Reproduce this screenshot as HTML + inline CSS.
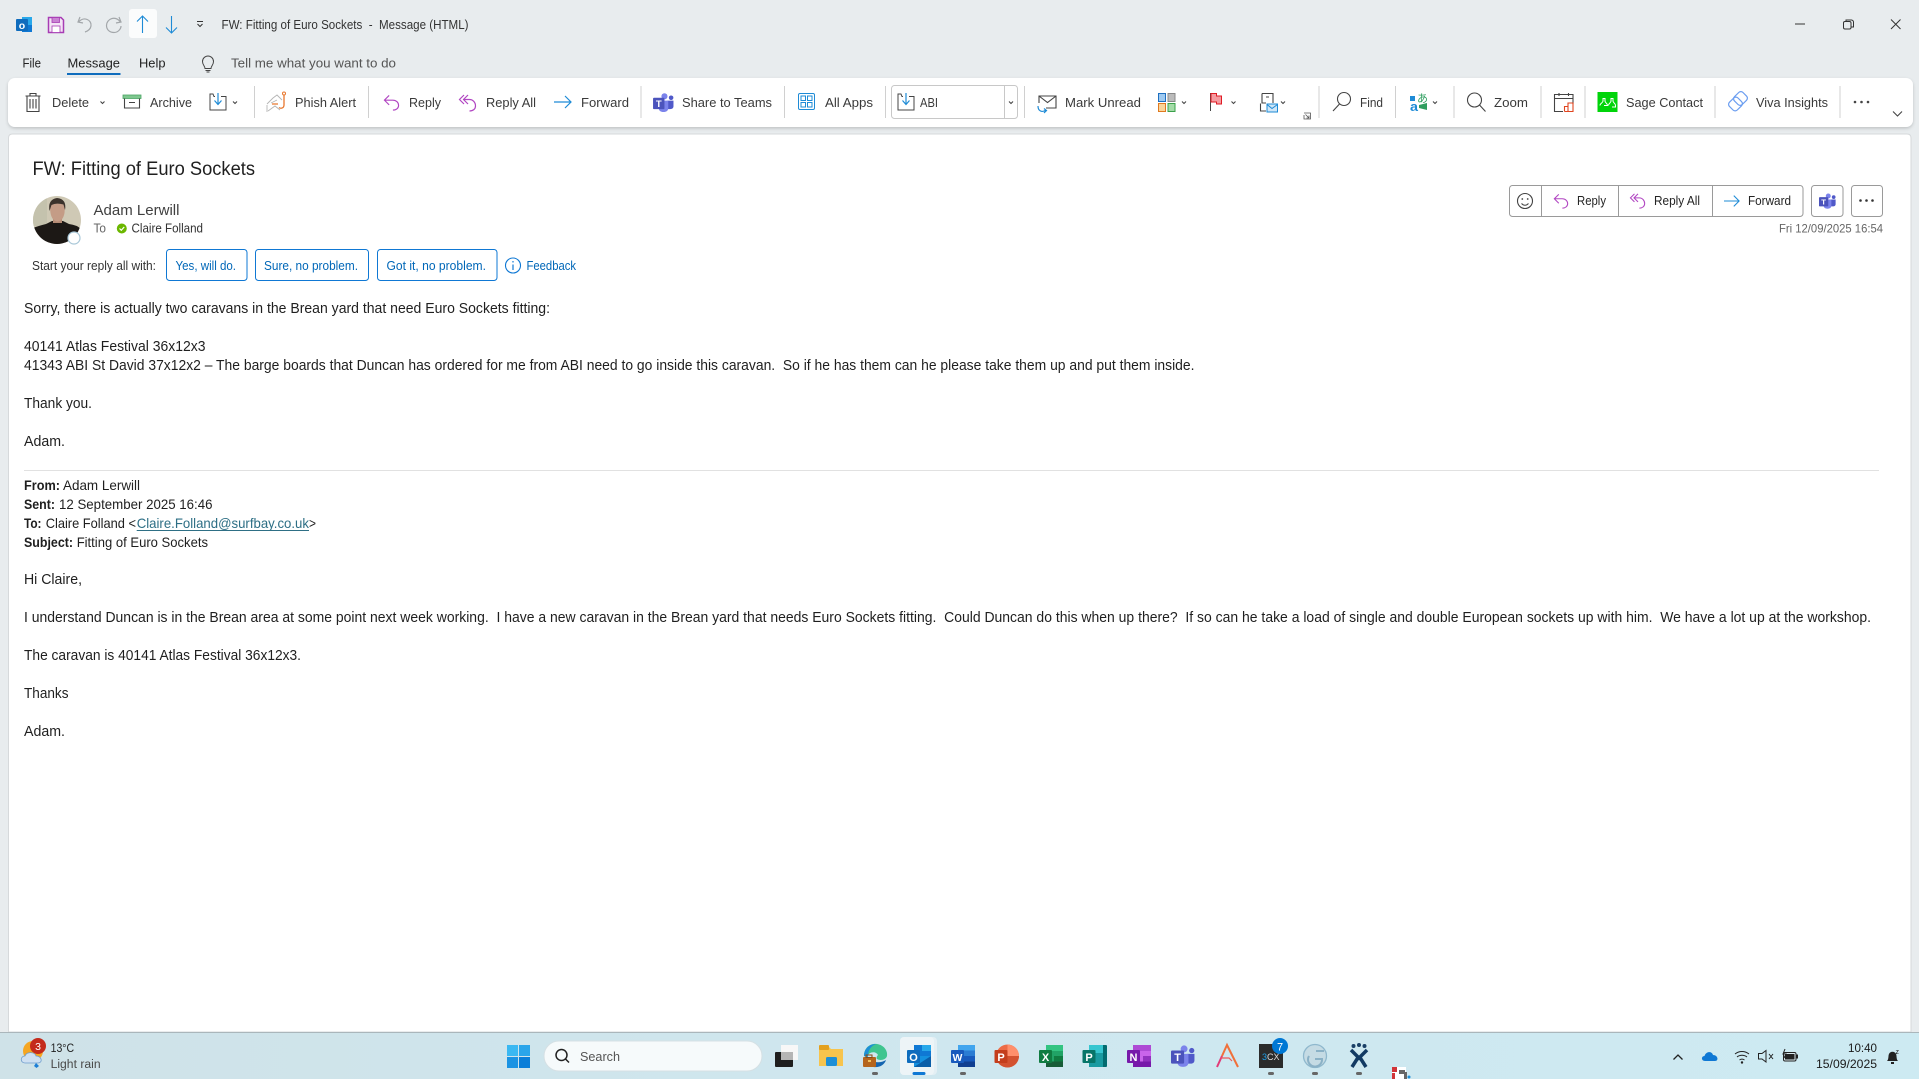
<!DOCTYPE html>
<html lang="en"><head><meta charset="utf-8"><title>FW: Fitting of Euro Sockets - Message (HTML)</title>
<style>
html,body{margin:0;padding:0;width:1919px;height:1079px;overflow:hidden;background:#e8ecee}
svg{display:block;position:absolute;left:0;top:0}
text{font-family:"Liberation Sans","DejaVu Sans",sans-serif;font-size:12px;fill:#262626;white-space:pre}
.b{font-size:14.5px;fill:#1f1f1f}
.m{font-size:14px;fill:#1f1f1f}
.t{font-size:13px;fill:#3a3a3a}
.bl{fill:#0067b8;font-size:13px}
.ln{fill:none;stroke:#444;stroke-width:1.1}
.fw{fill:none;stroke:#1e8bd6;stroke-width:1.2}
.ch{fill:none;stroke:#444;stroke-width:1.1}
</style></head><body>
<svg width="1919" height="1079" viewBox="0 0 1919 1079" xmlns="http://www.w3.org/2000/svg">
<defs>
<linearGradient id="tb" x1="0" x2="1" y1="0" y2="0"><stop offset="0" stop-color="#cfe2e8"/><stop offset=".5" stop-color="#cfe7ef"/><stop offset="1" stop-color="#cdeaf2"/></linearGradient>
<filter id="sh" x="-1%" y="-20%" width="102%" height="150%"><feDropShadow dx="0" dy="1.5" stdDeviation="1.5" flood-color="#000" flood-opacity=".18"/></filter>
<symbol id="reply" viewBox="0 0 18 18" overflow="visible"><path d="M6.5 1.5L1.5 6.5L6.5 11.5M1.500 6.500H10.500C14 6.500 16.500 9 16.500 12C16.500 15 14 17 10.500 17" fill="none" stroke="#b146c2" stroke-width="1.2"/></symbol>
<symbol id="replyall" viewBox="0 0 18 18" overflow="visible"><path d="M5 1L0.500 5.500L5 10M9 1L4.500 5.500L9 10M4.500 5.500H10.500C14 5.500 16.500 8.500 16.500 12C16.500 15 14 17 10.500 17" fill="none" stroke="#b146c2" stroke-width="1.2"/></symbol>
<symbol id="fwd" viewBox="0 0 18 18" overflow="visible"><path d="M0 9H17M11 3L17 9L11 15" fill="none" stroke="#1e8bd6" stroke-width="1.2"/></symbol>
<symbol id="move" viewBox="0 0 18 18" overflow="visible"><path d="M6 3.500H5L4 1H1V17H17V3.500H12" fill="none" stroke="#444" stroke-width="1"/><path d="M9 0V11M5.500 7.500L9 11.500L12.500 7.500" fill="none" stroke="#1e8bd6" stroke-width="1.2"/></symbol>
<symbol id="teams" viewBox="0 0 22 20" overflow="visible"><circle cx="12" cy="3.500" r="3.200" fill="#7b83eb"/><circle cx="19" cy="5" r="2.400" fill="#5059c9"/><path d="M15 8H21.500V14C21.500 16 20 17 18 17H15Z" fill="#5059c9"/><path d="M6 8H16V16C16 18.500 14 20 11 20C8 20 6 18.500 6 16Z" fill="#7b83eb"/><rect x="0" y="5" width="12" height="12" rx="1" fill="#4b53bc"/><text x="6" y="14.500" text-anchor="middle" style="font-size:10px;font-weight:bold;fill:#fff">T</text></symbol>
</defs>

<rect width="1919" height="1079" fill="#e8ecee"/>

<!-- Title bar -->
<g>
<rect x="22" y="17" width="10" height="8" fill="#28a8ea"/><rect x="22" y="25" width="10" height="7" fill="#0f78d4"/><rect x="16" y="19" width="12" height="12" rx="1" fill="#0f6cbd"/>
<text x="22" y="29" text-anchor="middle" style="font-size:10.500px;font-weight:bold;fill:#fff">o</text>
<path d="M48.500 17.500H61L63.500 20V32.500H48.500Z" fill="#f4e4f6" stroke="#a73cb4" stroke-width="1.500"/><rect x="52" y="17.500" width="7.500" height="5" fill="#c983d3" stroke="#a73cb4" stroke-width=".8"/><rect x="52" y="26" width="8" height="6.500" fill="#fff" stroke="#a73cb4" stroke-width=".8"/>
<path d="M80 17L78 22L83 23M78.500 22C84 16 92 20 91 26C90.500 29 88 31 85 32" fill="none" stroke="#a3a7aa" stroke-width="1.200"/>
<path d="M119 17L121 22L116 23M120.500 22C115 15 106.500 19 106.500 25.500C106.500 30 110 32.500 114 32.500C118 32.500 121 29 121 26" fill="none" stroke="#a3a7aa" stroke-width="1.200"/>
<rect x="129" y="9" width="28" height="29" rx="3" fill="#fbfcfc"/>
<path d="M142.500 33V16M137 21.500L142.500 16L148 21.500" fill="none" stroke="#1e8bd6" stroke-width="1.100"/>
<path d="M171.500 16V33M166 27.500L171.500 33L177 27.500" fill="none" stroke="#1e8bd6" stroke-width="1.100"/>
<path d="M197 21.500H203M197.500 24L200 26.500L202.500 24" fill="none" stroke="#333" stroke-width="1"/>
<text x="221.500" y="29" textLength="247" lengthAdjust="spacingAndGlyphs" style="font-size:12.500px;fill:#333">FW: Fitting of Euro Sockets  -  Message (HTML)</text>
<path d="M1795 24H1805" stroke="#333" stroke-width="1"/>
<rect x="1843.500" y="21.500" width="7.500" height="7.500" rx="1.500" fill="none" stroke="#333" stroke-width="1"/><path d="M1846 21V20H1851.500C1852.500 20 1853.500 21 1853.500 22V27H1851.500" fill="none" stroke="#333" stroke-width="1"/>
<path d="M1891 19.500L1900.500 29M1900.500 19.500L1891 29" stroke="#333" stroke-width="1"/>
</g>

<!-- Menu -->
<text x="22.500" y="67.500" textLength="18.500" lengthAdjust="spacingAndGlyphs" style="fill:#222;font-size:12.500px">File</text>
<text x="67.500" y="67.500" textLength="52.500" lengthAdjust="spacingAndGlyphs" style="fill:#222;font-size:12.500px">Message</text>
<rect x="67" y="73" width="53.500" height="2" fill="#0f6cbd"/>
<text x="139" y="67.500" textLength="26.500" lengthAdjust="spacingAndGlyphs" style="fill:#222;font-size:12.500px">Help</text>
<path d="M205 68.500C205 66 202.500 65 202.500 61.500A5.500 5.500 0 0 1 213.500 61.500C213.500 65 211 66 211 68.500ZM205.500 70.500H210.500M206.500 72H209.500" fill="none" stroke="#444" stroke-width="1"/>
<text x="231" y="67.500" textLength="165" lengthAdjust="spacingAndGlyphs" style="fill:#555;font-size:12.500px">Tell me what you want to do</text>

<!-- Ribbon -->
<rect x="8" y="78" width="1905" height="49" rx="7" fill="#fff" filter="url(#sh)"/>
<path d="M254.500 86V118M368.500 86V118M641 86V118M784.500 86V118M885.500 86V118M1024.500 86V118M1319 86V118M1395.500 86V118M1454 86V118M1541 86V118M1585 86V118M1715 86V118M1840 86V118" stroke="#d0d0d0" fill="none"/>

<path d="M25.500 96H40.500M30 96V93.500H36V96M27 96V111.500H39V96M30 99V108.500M33 99V108.500M36 99V108.500" class="ln" stroke-width="1"/>
<text x="52" y="107" textLength="37" lengthAdjust="spacingAndGlyphs" class="t">Delete</text>
<path d="M100.500 101.500L102.500 103.500L104.500 101.500" class="ch"/>
<rect x="123" y="95" width="18" height="3.500" fill="#7fc78f" stroke="#4aa564" stroke-width=".8"/><path d="M124.500 98.500V108H139.500V98.500M129 102.500H135" class="ln"/>
<text x="150" y="107" textLength="42" lengthAdjust="spacingAndGlyphs" class="t">Archive</text>
<use href="#move" x="209" y="93" width="18" height="18"/>
<path d="M233 101.500L235 103.500L237 101.500" class="ch"/>
<g><path d="M267 104L273 98L277 95L282 100M267 105V112M268 111L275 106L280 110M271 103L277 100" fill="none" stroke="#b5b5b5" stroke-width=".9"/><path d="M284 95V105C284 108 281 109 279 107.500M278 104H272" fill="none" stroke="#e8772e" stroke-width="1.300"/><circle cx="284" cy="93.500" r="1.500" fill="none" stroke="#e8772e"/></g>
<text x="295" y="107" textLength="61" lengthAdjust="spacingAndGlyphs" class="t">Phish Alert</text>
<use href="#reply" x="383" y="94" width="17" height="17"/>
<text x="409" y="107" textLength="32" lengthAdjust="spacingAndGlyphs" class="t">Reply</text>
<use href="#replyall" x="459" y="94" width="18" height="18"/>
<text x="486" y="107" textLength="50" lengthAdjust="spacingAndGlyphs" class="t">Reply All</text>
<use href="#fwd" x="554" y="93" width="18" height="18"/>
<text x="581" y="107" textLength="48" lengthAdjust="spacingAndGlyphs" class="t">Forward</text>
<use href="#teams" x="653" y="93" width="21" height="19"/>
<text x="682" y="107" textLength="90" lengthAdjust="spacingAndGlyphs" class="t">Share to Teams</text>
<g fill="none" stroke="#1e8bd6" stroke-width="1"><rect x="798.500" y="93.500" width="16" height="16" rx="1.500"/><rect x="801" y="96" width="4.500" height="4.500"/><rect x="807.500" y="96" width="4.500" height="4.500"/><rect x="801" y="102.500" width="4.500" height="4.500"/><rect x="807.500" y="102.500" width="4.500" height="4.500"/></g>
<text x="825" y="107" textLength="48" lengthAdjust="spacingAndGlyphs" class="t">All Apps</text>
<rect x="891.500" y="85.500" width="126" height="33" rx="3" fill="#fff" stroke="#c8c8c8"/><path d="M1004.500 86V118" stroke="#c8c8c8"/>
<use href="#move" x="897" y="93" width="18" height="18"/>
<text x="920" y="107" textLength="18" lengthAdjust="spacingAndGlyphs" class="t">ABI</text>
<path d="M1009 101.500L1011 103.500L1013 101.500" class="ch"/>
<path d="M1039 103V96H1056V108H1046M1039 96L1047.500 102.500L1056 96" class="ln" stroke-width="1"/><path d="M1038 106C1038 111 1042 113 1046 110M1044 113L1046.500 110.500L1044 108.500" class="fw"/>
<text x="1065" y="107" textLength="76" lengthAdjust="spacingAndGlyphs" class="t">Mark Unread</text>
<rect x="1158.500" y="93.500" width="7" height="8" fill="#9ec9f0" stroke="#1e6fc0"/><rect x="1168" y="93.500" width="7" height="8" fill="#bbb" stroke="#888"/><rect x="1158.500" y="103.500" width="7" height="8" fill="#fad59a" stroke="#e0791f"/><rect x="1168" y="103.500" width="7" height="8" fill="#a4dba8" stroke="#3aa04a"/>
<path d="M1182 101.500L1184 103.500L1186 101.500" class="ch"/>
<path d="M1210.500 93V111" stroke="#444"/><path d="M1211 93.500H1216.500V96H1221.500V104H1216.500V102H1211Z" fill="#f59ba0" stroke="#e01b24"/>
<path d="M1231.500 101.500L1233.500 103.500L1235.500 101.500" class="ch"/>
<path d="M1262 93.500H1273V103M1260.500 103.500V111H1266M1262 93.500V103H1266M1266 97H1269" class="ln" stroke-width="1"/><rect x="1267" y="104" width="10.500" height="8" fill="#cfe6f7" stroke="#1e8bd6"/><path d="M1267 104.500L1272 108.500L1277.500 104.500" fill="none" stroke="#1e8bd6"/>
<path d="M1281 101.500L1283 103.500L1285 101.500" class="ch"/>
<path d="M1304 113H1310.500V119H1304V115" fill="none" stroke="#555" stroke-width=".8"/><path d="M1305.500 114.500L1309 118M1309 115.500V118H1306.500" fill="none" stroke="#555" stroke-width=".8"/>
<circle cx="1344" cy="99" r="6.500" class="ln"/><path d="M1339.500 104L1333 111" class="ln"/>
<text x="1360" y="107" textLength="23" lengthAdjust="spacingAndGlyphs" class="t">Find</text>
<path d="M1410 96H1415V101H1410Z" fill="#1e8bd6"/><text x="1410" y="111" textLength="8" lengthAdjust="spacingAndGlyphs" style="font-size:13px;font-weight:bold;fill:#1e8bd6">a</text><text x="1417" y="102" textLength="11" lengthAdjust="spacingAndGlyphs" style="font-size:11px;fill:#2f9e5f;font-family:'Noto Sans CJK JP',sans-serif">あ</text><path d="M1419 105L1427 103V110L1419 108Z" fill="#2f9e5f"/>
<path d="M1433 101.500L1435 103.500L1437 101.500" class="ch"/>
<circle cx="1474.500" cy="100" r="7" class="ln"/><path d="M1479.500 105L1485.500 111.500" class="ln"/>
<text x="1494" y="107" textLength="34" lengthAdjust="spacingAndGlyphs" class="t">Zoom</text>
<path d="M1554.500 112V94.500H1573V104M1554.500 98.500H1573M1559 93V96M1568.500 93V96M1554.500 111.500H1563" class="ln" stroke-width="1"/>
<path d="M1564.500 111.500V106.500H1568V111.500M1568 111.500V103H1573V111.500H1564.500" fill="none" stroke="#e0451f" stroke-width="1.100"/>
<rect x="1597.500" y="92" width="20" height="20" fill="#00d40a"/>
<path d="M1600 105.500C1600 103 1603 103 1603 101V98.500H1605V101C1605 103 1607.500 103 1607.500 105.500H1604M1608.500 105.500C1608.500 103 1611 103 1611 101V98.500H1613V101C1613 103 1615.500 103 1615.500 105.500V107H1612" fill="none" stroke="#fff" stroke-width="1"/>
<text x="1626" y="107" textLength="77" lengthAdjust="spacingAndGlyphs" class="t">Sage Contact</text>
<g fill="none" stroke="#6a9df0" stroke-width="1.200"><rect x="1735" y="92.500" width="11" height="12" rx="3" transform="rotate(45 1740.500 98.500)"/><rect x="1730" y="98" width="11" height="12" rx="3" transform="rotate(45 1735.500 104)"/></g>
<text x="1756" y="107" textLength="72" lengthAdjust="spacingAndGlyphs" class="t">Viva Insights</text>
<circle cx="1855" cy="102" r="1.300" fill="#444"/><circle cx="1861.500" cy="102" r="1.300" fill="#444"/><circle cx="1868" cy="102" r="1.300" fill="#444"/>
<path d="M1893 111.500L1897.500 116L1902 111.500" class="ln"/>

<!-- Message pane -->
<path d="M8.500 1032V138Q8.500 134 12.500 134H1907Q1911 134 1911 138V1032Z" fill="#fff" stroke="#d6d9db" stroke-width="1"/>

<text x="32.500" y="175" textLength="222.500" lengthAdjust="spacingAndGlyphs" style="font-size:19px;fill:#1f1f1f">FW: Fitting of Euro Sockets</text>

<clipPath id="av"><circle cx="57" cy="220" r="24"/></clipPath>
<g clip-path="url(#av)">
<rect x="33" y="196" width="48" height="48" fill="#cfc9b5"/>
<rect x="33" y="196" width="14" height="30" fill="#c4c2ad"/>
<path d="M33 244V228Q38 226 46 224L52 221H63L69 224Q77 225 81 229V244Z" fill="#1c1815"/>
<rect x="53" y="217" width="9" height="6" fill="#b48a74"/>
<path d="M49.500 205Q57 202 65 205L64.500 213Q63 221 57.500 221.500Q52 221 50.500 213Z" fill="#c49c86"/>
<path d="M49.500 211Q47.500 199.500 57 198Q67 199 65 210L63.500 204.500Q56 202.500 51.500 205Z" fill="#3b322b"/>
</g>
<circle cx="74" cy="238" r="6" fill="#fff" stroke="#a8c7d8" stroke-width="1.200"/>
<text x="93.500" y="215" textLength="86" lengthAdjust="spacingAndGlyphs" style="font-size:15px;fill:#404040">Adam Lerwill</text>
<text x="93.500" y="232.500" textLength="12.500" lengthAdjust="spacingAndGlyphs" style="fill:#666;font-size:12.500px">To</text>
<circle cx="121.800" cy="228.500" r="5" fill="#6bb700"/><path d="M119.500 228.500L121.300 230.300L124.200 227" fill="none" stroke="#fff" stroke-width="1.200"/>
<text x="131.500" y="232.500" textLength="71.500" lengthAdjust="spacingAndGlyphs" style="fill:#333;font-size:12.500px">Claire Folland</text>

<text x="32" y="270" textLength="124" lengthAdjust="spacingAndGlyphs" style="fill:#333;font-size:12.500px">Start your reply all with:</text>
<g fill="#fff" stroke="#0f78d4" stroke-width="1"><rect x="166.500" y="249.500" width="80.500" height="31" rx="3"/><rect x="255.500" y="249.500" width="113" height="31" rx="3"/><rect x="377.500" y="249.500" width="119.500" height="31" rx="3"/></g>
<text x="175.500" y="270" textLength="60.500" lengthAdjust="spacingAndGlyphs" class="bl">Yes, will do.</text>
<text x="264" y="270" textLength="94" lengthAdjust="spacingAndGlyphs" class="bl">Sure, no problem.</text>
<text x="386.500" y="270" textLength="99.500" lengthAdjust="spacingAndGlyphs" class="bl">Got it, no problem.</text>
<circle cx="513" cy="265.500" r="7.500" fill="none" stroke="#0f78d4" stroke-width="1.100"/><path d="M513 264.500V270M513 261V262.500" stroke="#0f78d4" stroke-width="1.200"/>
<text x="526.500" y="270" textLength="49.500" lengthAdjust="spacingAndGlyphs" class="bl">Feedback</text>

<!-- Action buttons -->
<rect x="1509.500" y="185.500" width="293.500" height="31" rx="3" fill="#fff" stroke="#9a9a9a"/>
<path d="M1541.500 186V216M1618.500 186V216M1712.500 186V216" stroke="#9a9a9a"/>
<circle cx="1525" cy="201" r="7.500" fill="none" stroke="#444" stroke-width="1.100"/><circle cx="1522.300" cy="199" r=".9" fill="#444"/><circle cx="1527.700" cy="199" r=".9" fill="#444"/><path d="M1521.500 203.500Q1525 207 1528.500 203.500" fill="none" stroke="#444"/>
<use href="#reply" x="1553" y="193" width="16" height="16"/>
<text x="1577" y="205" textLength="29" lengthAdjust="spacingAndGlyphs" style="fill:#242424;font-size:12.500px">Reply</text>
<use href="#replyall" x="1630" y="193" width="16" height="16"/>
<text x="1654" y="205" textLength="46" lengthAdjust="spacingAndGlyphs" style="fill:#242424;font-size:12.500px">Reply All</text>
<use href="#fwd" x="1724" y="193" width="16" height="16"/>
<text x="1748" y="205" textLength="43" lengthAdjust="spacingAndGlyphs" style="fill:#242424;font-size:12.500px">Forward</text>
<rect x="1811.500" y="185.500" width="31.500" height="31" rx="3" fill="#fff" stroke="#9a9a9a"/>
<use href="#teams" x="1819" y="193" width="17" height="16"/>
<rect x="1851.500" y="185.500" width="31" height="31" rx="3" fill="#fff" stroke="#9a9a9a"/>
<circle cx="1860.500" cy="200.500" r="1.300" fill="#333"/><circle cx="1866.500" cy="200.500" r="1.300" fill="#333"/><circle cx="1872.500" cy="200.500" r="1.300" fill="#333"/>
<text x="1779" y="232.500" textLength="104" lengthAdjust="spacingAndGlyphs" style="fill:#666">Fri 12/09/2025 16:54</text>

<!-- Body -->
<text class="b" x="24" y="313" textLength="526" lengthAdjust="spacingAndGlyphs">Sorry, there is actually two caravans in the Brean yard that need Euro Sockets fitting:</text>
<text class="b" x="24" y="351" textLength="181.500" lengthAdjust="spacingAndGlyphs">40141 Atlas Festival 36x12x3</text>
<text class="b" x="24" y="370" textLength="1170.500" lengthAdjust="spacingAndGlyphs">41343 ABI St David 37x12x2 – The barge boards that Duncan has ordered for me from ABI need to go inside this caravan.  So if he has them can he please take them up and put them inside.</text>
<text class="b" x="24" y="408" textLength="68" lengthAdjust="spacingAndGlyphs">Thank you.</text>
<text class="b" x="24" y="446" textLength="41" lengthAdjust="spacingAndGlyphs">Adam.</text>
<path d="M24 470.500H1879" stroke="#e1e1e1"/>

<text class="m" x="24" y="490" textLength="36" lengthAdjust="spacingAndGlyphs" font-weight="bold">From:</text>
<text class="m" x="63" y="490" textLength="77" lengthAdjust="spacingAndGlyphs">Adam Lerwill</text>
<text class="m" x="24" y="509" textLength="31" lengthAdjust="spacingAndGlyphs" font-weight="bold">Sent:</text>
<text class="m" x="59" y="509" textLength="153.500" lengthAdjust="spacingAndGlyphs">12 September 2025 16:46</text>
<text class="m" x="24" y="528" textLength="17.500" lengthAdjust="spacingAndGlyphs" font-weight="bold">To:</text>
<text class="m" x="45.700" y="528" textLength="90.300" lengthAdjust="spacingAndGlyphs">Claire Folland &lt;</text>
<text class="m" x="136.700" y="528" textLength="172.300" lengthAdjust="spacingAndGlyphs" style="fill:#2e6f85">Claire.Folland@surfbay.co.uk</text>
<path d="M136.700 530.500H309" stroke="#2e6f85" stroke-width="1"/>
<text class="m" x="309" y="528" textLength="7" lengthAdjust="spacingAndGlyphs">&gt;</text>
<text class="m" x="24" y="547" textLength="49" lengthAdjust="spacingAndGlyphs" font-weight="bold">Subject:</text>
<text class="m" x="76.700" y="547" textLength="131.300" lengthAdjust="spacingAndGlyphs">Fitting of Euro Sockets</text>

<text class="b" x="24" y="584" textLength="58" lengthAdjust="spacingAndGlyphs">Hi Claire,</text>
<text class="b" x="24" y="622" textLength="1847" lengthAdjust="spacingAndGlyphs">I understand Duncan is in the Brean area at some point next week working.  I have a new caravan in the Brean yard that needs Euro Sockets fitting.  Could Duncan do this when up there?  If so can he take a load of single and double European sockets up with him.  We have a lot up at the workshop.</text>
<text class="b" x="24" y="660" textLength="277" lengthAdjust="spacingAndGlyphs">The caravan is 40141 Atlas Festival 36x12x3.</text>
<text class="b" x="24" y="698" textLength="44.500" lengthAdjust="spacingAndGlyphs">Thanks</text>
<text class="b" x="24" y="736" textLength="41" lengthAdjust="spacingAndGlyphs">Adam.</text>

<!-- Taskbar -->
<rect x="0" y="1032" width="1919" height="47" fill="url(#tb)"/>
<rect x="0" y="1032" width="1919" height="1" fill="#aab6bb"/>

<circle cx="33" cy="1051" r="10" fill="#f5a623"/>
<path d="M25 1063C20 1063 20 1056 25 1056C27 1051 35 1052 36 1056C42 1056 43 1063 38 1063Z" fill="#cfe0f2" stroke="#6f9ccc" stroke-width=".8"/>
<path d="M36 1063L39 1066L36.500 1068L34 1066Z" fill="#1e7fd6"/>
<circle cx="38" cy="1046" r="8" fill="#c42b1c"/><text x="38" y="1050" text-anchor="middle" style="font-size:10.500px;fill:#fff">3</text>
<text x="50.600" y="1052" textLength="23.500" lengthAdjust="spacingAndGlyphs" style="font-size:11.500px;fill:#1f1f1f">13°C</text>
<text x="50.600" y="1068" textLength="50" lengthAdjust="spacingAndGlyphs" style="font-size:11.500px;fill:#4a4a4a">Light rain</text>

<rect x="507" y="1045" width="11" height="11" fill="#3ab8f2"/><rect x="519" y="1045" width="11" height="11" fill="#2aa5ea"/><rect x="507" y="1057" width="11" height="11" fill="#1b93e3"/><rect x="519" y="1057" width="11" height="11" fill="#0b7ed8"/>
<rect x="544" y="1041" width="218" height="30" rx="15" fill="#f6fafb" stroke="#d5e0e4"/>
<circle cx="561.500" cy="1055" r="5.500" fill="none" stroke="#222" stroke-width="1.500"/><path d="M565.500 1059L569 1062.500" stroke="#222" stroke-width="1.500"/>
<text x="580" y="1061" textLength="40" lengthAdjust="spacingAndGlyphs" style="font-size:13px;fill:#555">Search</text>

<!-- taskbar apps -->
<rect x="781" y="1045" width="17" height="15" fill="#f7f7f7"/>
<rect x="775" y="1052" width="18" height="15" rx="1" fill="#1e1e1e"/><rect x="781" y="1052" width="12" height="8" fill="#b5b5b5"/>

<path d="M819 1047H829L831 1049H843V1066H819Z" fill="#f7c44d"/><rect x="819" y="1045" width="10" height="5" rx="1" fill="#e4a11f"/><rect x="826" y="1057" width="11" height="9" rx="1.500" fill="#1e8fd6"/>

<path d="M864 1056C864 1047 871 1043 877 1044C884 1045 888 1051 887 1056C886 1060 880 1061 877 1059C876 1058 877 1056 878 1055C876 1051 869 1051 867 1057Z" fill="#3fc58f"/>
<path d="M864 1056C864 1048 870 1044 876 1044C871 1046 868 1050 868 1057Z" fill="#1e8fd6"/>
<path d="M870 1066C877 1069 884 1066 886 1060C881 1063 875 1063 871 1060Z" fill="#1565b0"/>
<rect x="863" y="1057" width="13" height="10" rx="1" fill="#b5651d"/><rect x="866" y="1055" width="6" height="2.500" fill="none" stroke="#8a4a12"/><rect x="868" y="1060" width="3" height="2" fill="#f2c25e"/>

<rect x="900" y="1037" width="37" height="38" rx="4" fill="#e3eff4"/><rect x="900" y="1037" width="34" height="38" rx="4" fill="#edf4f7"/>
<rect x="914" y="1045" width="17" height="11" fill="#0f78d4"/><rect x="922" y="1045" width="9" height="6" fill="#28a8ea"/><path d="M914 1056L931 1056V1067H914Z" fill="#1490df"/><path d="M914 1067L931 1056V1067Z" fill="#0a5ea8"/>
<rect x="907" y="1050" width="13" height="13" rx="1" fill="#0f6cbd"/><text x="913.500" y="1061" text-anchor="middle" style="font-size:11px;font-weight:bold;fill:#fff">O</text>
<rect x="912.500" y="1072" width="13" height="3" rx="1.500" fill="#0f78d4"/>

<rect x="958" y="1045" width="17" height="22" fill="#2b7cd3"/><rect x="958" y="1045" width="17" height="5.500" fill="#41a5ee"/><rect x="958" y="1056" width="17" height="5.500" fill="#185abd"/><rect x="958" y="1061.500" width="17" height="5.500" fill="#103f91"/>
<rect x="951" y="1050" width="13" height="13" rx="1" fill="#185abd"/><text x="957.500" y="1061" text-anchor="middle" style="font-size:10.500px;font-weight:bold;fill:#fff">W</text>

<circle cx="1007.500" cy="1056" r="11.500" fill="#ed6c47"/><path d="M1007.500 1056V1044.500A11.500 11.500 0 0 1 1019 1056Z" fill="#ff8f6b"/><path d="M1007.500 1056H1019A11.500 11.500 0 0 1 996 1056Z" fill="#d35230"/>
<rect x="994.500" y="1050" width="13" height="13" rx="1" fill="#c43e1c"/><text x="1001" y="1061" text-anchor="middle" style="font-size:11px;font-weight:bold;fill:#fff">P</text>

<rect x="1046" y="1045" width="17" height="22" fill="#21a366"/><rect x="1046" y="1045" width="17" height="6" fill="#33c481"/><rect x="1054" y="1056" width="9" height="5.500" fill="#107c41"/><rect x="1046" y="1061.500" width="17" height="5.500" fill="#185c37"/>
<rect x="1039" y="1050" width="13" height="13" rx="1" fill="#107c41"/><text x="1045.500" y="1061" text-anchor="middle" style="font-size:11px;font-weight:bold;fill:#fff">X</text>

<rect x="1089" y="1045" width="18" height="22" rx="1" fill="#036c70"/><rect x="1089" y="1045" width="14" height="22" fill="#1a9ba1"/><rect x="1089" y="1045" width="14" height="8" fill="#37c6d0"/>
<rect x="1082.500" y="1050" width="13" height="13" rx="1" fill="#077568"/><text x="1089" y="1061" text-anchor="middle" style="font-size:11px;font-weight:bold;fill:#fff">P</text>

<rect x="1133" y="1045" width="18" height="22" rx="1" fill="#ca64ea"/><rect x="1133" y="1045" width="18" height="6" fill="#ae4bd5"/><rect x="1143" y="1056" width="8" height="5.500" fill="#9332bf"/><rect x="1133" y="1061.500" width="18" height="5.500" fill="#7719aa"/>
<rect x="1127" y="1050" width="13" height="13" rx="1" fill="#7719aa"/><text x="1133.500" y="1061" text-anchor="middle" style="font-size:11px;font-weight:bold;fill:#fff">N</text>

<use href="#teams" x="1171" y="1045" width="24" height="22"/>

<path d="M1217 1067L1222 1056" stroke="#e23a78" stroke-width="2"/>
<path d="M1222 1056L1227 1045L1238 1067" fill="none" stroke="#f0703a" stroke-width="2"/>
<path d="M1221 1058L1229 1058L1232 1061" fill="none" stroke="#ee5a5a" stroke-width="1.200"/>

<rect x="1259" y="1044" width="24" height="24" fill="#2b2b2b"/>
<text x="1262" y="1060" style="font-size:9px;fill:#1e9fe8">3</text><text x="1267" y="1060" style="font-size:9px;fill:#ddd">CX</text>
<circle cx="1280" cy="1046" r="8" fill="#0078d4"/><text x="1280" y="1050.500" text-anchor="middle" style="font-size:11px;fill:#fff">7</text>

<circle cx="1315" cy="1056" r="11.500" fill="#c5dbe4" stroke="#8fb8cd" stroke-width="1.300"/><path d="M1324 1051H1316M1309 1056A7 7 0 1 0 1322 1059H1315" fill="none" stroke="#8ab1c6" stroke-width="2"/>

<circle cx="1353.500" cy="1046" r="2" fill="#1a3f66"/><circle cx="1359" cy="1045" r="2" fill="#1a3f66"/><circle cx="1364.500" cy="1046" r="2" fill="#1a3f66"/>
<path d="M1351 1050L1359 1058L1367 1050M1359 1056L1352 1067M1359 1056L1366 1067" fill="none" stroke="#123a63" stroke-width="3.500"/>

<g fill="#666"><rect x="872" y="1072" width="6" height="3" rx="1.500"/><rect x="960" y="1072" width="6" height="3" rx="1.500"/><rect x="1268" y="1072" width="6" height="3" rx="1.500"/><rect x="1312" y="1072" width="6" height="3" rx="1.500"/><rect x="1356" y="1072" width="6" height="3" rx="1.500"/></g>

<rect x="1392" y="1067" width="14" height="12" fill="#fff"/><rect x="1392" y="1067" width="5" height="5" fill="#d13438"/><rect x="1392" y="1073" width="3" height="6" fill="#d13438"/><rect x="1399" y="1070" width="6" height="4" fill="#666"/><rect x="1404" y="1072" width="3" height="7" fill="#666"/><circle cx="1409" cy="1077" r="1.500" fill="#1e8fd6"/>

<!-- tray -->
<path d="M1673.500 1059.500L1678 1055L1682.500 1059.500" fill="none" stroke="#222" stroke-width="1.300"/>
<path d="M1705 1061C1701 1061 1701 1056 1704.500 1056C1706 1051 1712 1051 1713 1055C1718 1055 1719 1061 1715 1061Z" fill="#0f78d4"/>
<path d="M1735 1054A11 11 0 0 1 1749 1054M1737 1057A8 8 0 0 1 1747 1057M1739.500 1060A4.500 4.500 0 0 1 1744.500 1060" fill="none" stroke="#222" stroke-width="1"/><circle cx="1742" cy="1062.500" r="1.200" fill="#222"/>
<path d="M1758.500 1053.500H1762L1766 1050.500V1062L1762 1059H1758.500ZM1769 1054L1773 1059M1773 1054L1769 1059" fill="none" stroke="#222" stroke-width="1"/>
<rect x="1783.500" y="1052.500" width="12.500" height="8.500" rx="1.500" fill="#d9e9ee" stroke="#222"/><rect x="1785" y="1054" width="9.500" height="5.500" fill="#222"/><rect x="1796" y="1054.500" width="2" height="4" fill="#222"/><path d="M1785 1049L1783 1054H1786L1784 1058" fill="none" stroke="#222"/>
<text x="1848" y="1052" textLength="29" lengthAdjust="spacingAndGlyphs" style="font-size:12px;fill:#1a1a1a">10:40</text>
<text x="1816" y="1068" textLength="61" lengthAdjust="spacingAndGlyphs" style="font-size:12px;fill:#1a1a1a">15/09/2025</text>
<path d="M1887 1061C1889 1059 1888 1056 1889 1054C1890 1051 1895 1051 1896 1054C1897 1056 1896 1059 1898 1061Z" fill="#222"/><rect x="1891" y="1062" width="3" height="2" fill="#222"/><text x="1895.500" y="1054" style="font-size:7px;fill:#222">z</text>
</svg>
</body></html>
